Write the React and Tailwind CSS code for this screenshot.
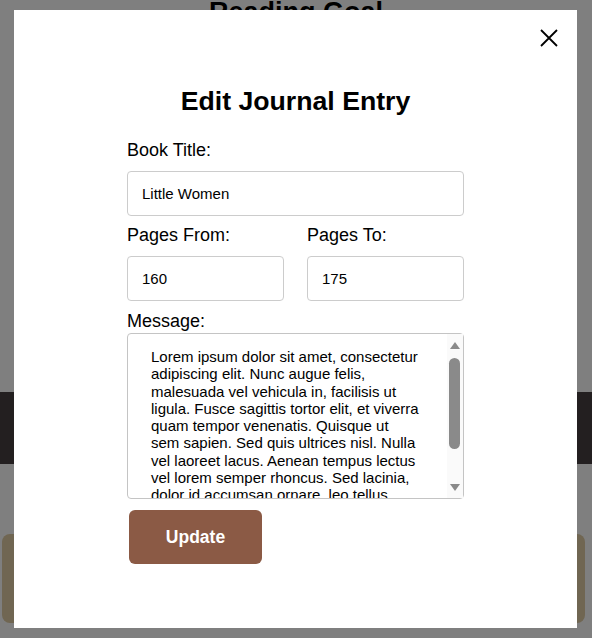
import { useState } from 'react';

const message =
  'Lorem ipsum dolor sit amet, consectetur adipiscing elit. Nunc augue felis, malesuada vel vehicula in, facilisis ut ligula. Fusce sagittis tortor elit, et viverra quam tempor venenatis. Quisque ut sem sapien. Sed quis ultrices nisl. Nulla vel laoreet lacus. Aenean tempus lectus vel lorem semper rhoncus. Sed lacinia, dolor id accumsan ornare, leo tellus pulvinar nisl, vitae cursus sem velit ut magna. Integer convallis elit vitae ipsum tincidunt, nec posuere dui dictum.';

function FakeScrollbar() {
  // drawn over the textarea's right edge, like the classic scrollbar in the shot
  return (
    <div className="pointer-events-none absolute bottom-[1px] right-[1px] top-[1px] w-[16px] bg-[#fafafa]">
      <svg viewBox="0 0 10 7" className="absolute left-[3px] top-[8px] h-[7px] w-[10px]">
        <path d="M5 0 L10 7 L0 7 Z" fill="#8a8a8a" />
      </svg>
      <div className="absolute left-[2px] top-[24px] h-[91px] w-[11px] rounded-full bg-[#8a8a8a]" />
      <svg viewBox="0 0 10 7" className="absolute bottom-[7px] left-[3px] h-[7px] w-[10px]">
        <path d="M0 0 L10 0 L5 7 Z" fill="#8a8a8a" />
      </svg>
    </div>
  );
}

function EditEntryModal() {
  const [title, setTitle] = useState('Little Women');
  const [from, setFrom] = useState('160');
  const [to, setTo] = useState('175');
  const [text, setText] = useState(message);

  return (
    <div className="fixed inset-0 flex items-center justify-center bg-black/50 pr-[1px]">
      <div className="relative h-[618px] w-[563px] bg-white pt-[76px]">
        {/* Close */}
        <button type="button" className="absolute right-[19px] top-[19px] h-[18px] w-[18px]" aria-label="Close">
          <svg viewBox="0 0 18 18" className="block h-[18px] w-[18px]">
            <path d="M1 1 L17 17 M17 1 L1 17" stroke="#000" strokeWidth="1.8" fill="none" />
          </svg>
        </button>

        <h2 className="text-center text-[26.67px] font-bold leading-[30px] text-black">Edit Journal Entry</h2>

        <form className="mx-auto w-[337px]" onSubmit={(e) => e.preventDefault()}>
          <label className="mt-[24px] block text-[18px] leading-[21px] text-black">Book Title:</label>
          <input
            value={title}
            onChange={(e) => setTitle(e.target.value)}
            className="mt-[10px] block h-[45px] w-full rounded-[4px] border border-[#cccccc] px-[14px] text-[15px] leading-[1.15] text-black outline-none"
          />

          <div className="mt-[9px] flex gap-[23px]">
            <div className="flex-1">
              <label className="block text-[18px] leading-[21px] text-black">Pages From:</label>
              <input
                value={from}
                onChange={(e) => setFrom(e.target.value)}
                className="mt-[10px] block h-[45px] w-full rounded-[4px] border border-[#cccccc] px-[14px] text-[15px] leading-[1.15] text-black outline-none"
              />
            </div>
            <div className="flex-1">
              <label className="block text-[18px] leading-[21px] text-black">Pages To:</label>
              <input
                value={to}
                onChange={(e) => setTo(e.target.value)}
                className="mt-[10px] block h-[45px] w-full rounded-[4px] border border-[#cccccc] px-[14px] text-[15px] leading-[1.15] text-black outline-none"
              />
            </div>
          </div>

          <label className="mt-[10px] block text-[18px] leading-[21px] text-black">Message:</label>
          <div className="relative mt-[1px]">
            <textarea
              value={text}
              onChange={(e) => setText(e.target.value)}
              className="block h-[166px] w-full resize-none overflow-hidden rounded-[4px] border border-[#c4c4c4] pb-[10px] pl-[23px] pr-[43px] pt-[14px] text-[15px] leading-[1.15] text-black outline-none"
            />
            <FakeScrollbar />
          </div>

          <button
            type="submit"
            className="ml-[2px] mt-[11px] flex h-[54px] w-[133px] items-center justify-center rounded-[6px] bg-[#8b5a45] text-[17.5px] font-bold text-white"
          >
            Update
          </button>
        </form>
      </div>
    </div>
  );
}

export default function App() {
  return (
    <div className="relative h-[638px] overflow-hidden bg-white font-['Liberation_Sans',Arial,sans-serif]">
      {/* page behind the modal */}
      <h1 className="text-center text-[27px] font-bold leading-[24px] text-black">Reading Goal</h1>
      <div className="mt-[368px] h-[72px] bg-[#463e40]" />
      <div className="ml-[2px] mt-[70px] h-[89px] w-[583px] rounded-lg bg-[#e0cca4]" />

      <EditEntryModal />
    </div>
  );
}
